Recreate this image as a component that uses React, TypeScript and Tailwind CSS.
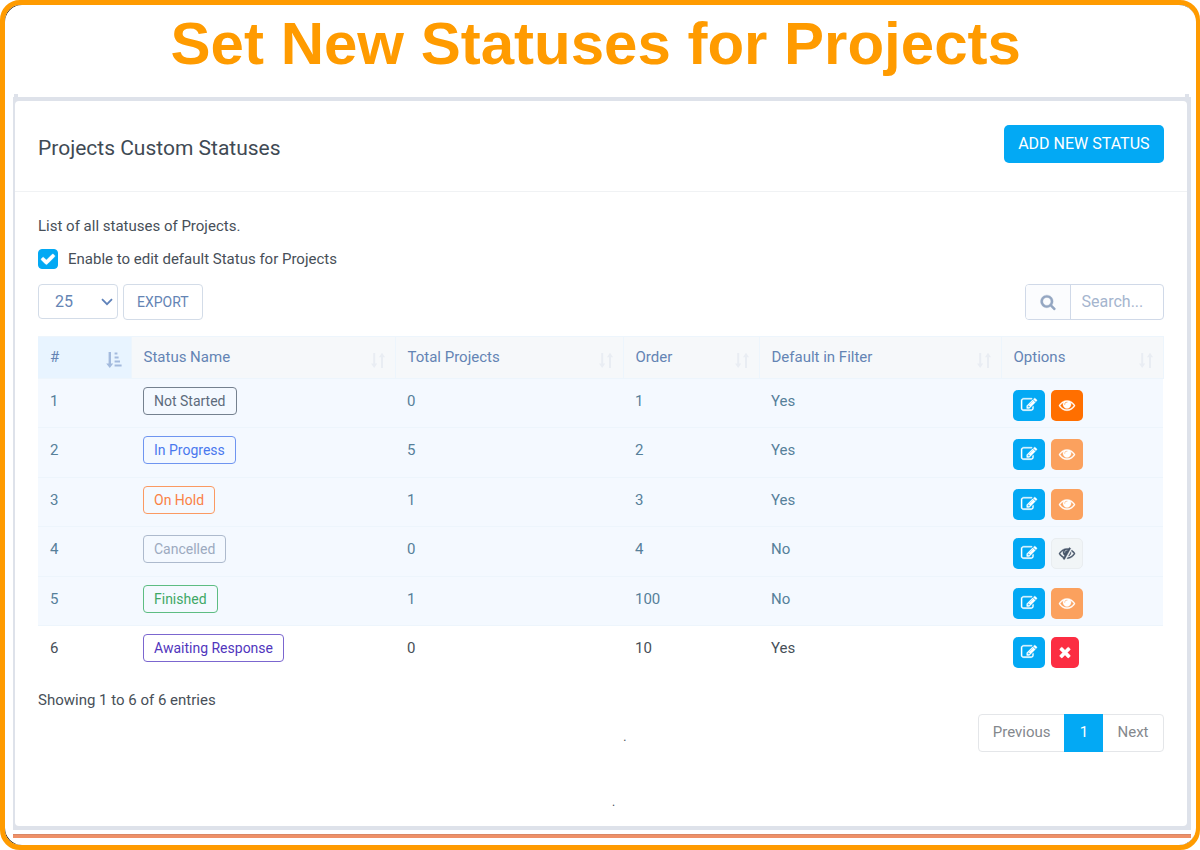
import { useState, type ReactNode } from "react";

type Status = {
  id: number;
  name: string;
  total: number;
  order: number;
  inFilter: boolean;
  badge: string;
  action: "eye" | "eye-muted" | "hidden" | "delete";
};

const STATUSES: Status[] = [
  { id: 1, name: "Not Started", total: 0, order: 1, inFilter: true, badge: "border-[#75818f] text-[#5d6b7c]", action: "eye" },
  { id: 2, name: "In Progress", total: 5, order: 2, inFilter: true, badge: "border-[#6f95f0] text-[#4a78ee]", action: "eye-muted" },
  { id: 3, name: "On Hold", total: 1, order: 3, inFilter: true, badge: "border-[#fb9a62] text-[#fa8144]", action: "eye-muted" },
  { id: 4, name: "Cancelled", total: 0, order: 4, inFilter: false, badge: "border-[#adbacd] text-[#9caac0]", action: "hidden" },
  { id: 5, name: "Finished", total: 1, order: 100, inFilter: false, badge: "border-[#5dbd82] text-[#3fa866]", action: "eye-muted" },
  { id: 6, name: "Awaiting Response", total: 0, order: 10, inFilter: true, badge: "border-[#7b66cf] text-[#5136bd]", action: "delete" },
];

const COLUMNS = [
  { label: "#", width: "w-[93px]" },
  { label: "Status Name", width: "w-[264px]" },
  { label: "Total Projects", width: "w-[228px]" },
  { label: "Order", width: "w-[136px]" },
  { label: "Default in Filter", width: "w-[242px]" },
  { label: "Options", width: "w-[162px]" },
];

const ICONS = {
  edit: "M888 1184l116-116-152-152-116 116v56h96v96h56zm440-720q-16-16-33 1l-350 350q-17 17-1 33t33-1l350-350q17-17 1-33zm80 594v190q0 119-84.5 203.5t-203.5 84.5h-832q-119 0-203.5-84.5t-84.5-203.5v-832q0-119 84.5-203.5t203.5-84.5h832q63 0 117 25 15 7 18 23 3 17-9 29l-49 49q-14 14-32 8-23-6-45-6h-832q-66 0-113 47t-47 113v832q0 66 47 113t113 47h832q66 0 113-47t47-113v-126q0-13 9-22l64-64q15-15 35-7t20 29zm-96-738l288 288-672 672h-288v-288zm444 132l-92 92-288-288 92-92q28-28 68-28t68 28l152 152q28 28 28 68t-28 68z",
  eye: "M1664 960q-152-236-381-353 61 104 61 225 0 185-131.5 316.5t-316.5 131.5-316.5-131.5-131.5-316.5q0-121 61-225-229 117-381 353 133 205 333.5 326.5t434.5 121.5 434.5-121.5 333.5-326.5zm-720-384q0-20-14-34t-34-14q-125 0-214.5 89.5t-89.5 214.5q0 20 14 34t34 14 34-14 14-34q0-86 61-147t147-61q20 0 34-14t14-34zm848 384q0 34-20 69-140 230-376.5 368.5t-499.5 138.5-499.5-139-376.5-368q-20-35-20-69t20-69q140-229 376.5-368t499.5-139 499.5 139 376.5 368q20 35 20 69z",
  eyeSlash: "M555 1335l78-141q-87-63-136-159t-49-203q0-121 61-225-229 117-381 353 167 258 427 375zm389-759q0-20-14-34t-34-14q-125 0-214.5 89.5t-89.5 214.5q0 20 14 34t34 14 34-14 14-34q0-86 61-147t147-61q20 0 34-14t14-34zm363-191q0 7-1 9-106 189-316 567t-315 566l-49 89q-10 16-28 16-12 0-134-70-16-10-16-28 0-12 44-87-143-65-263.5-173t-208.5-245q-20-31-20-69t20-69q153-235 380-371t496-136q89 0 180 17l54-97q10-16 28-16 5 0 18 6t31 15.5 33 18.5 31.5 18.5 19.5 11.5q16 10 16 27zm37 447q0 139-79 253.5t-209 164.5l280-502q8 45 8 84zm448 128q0 35-20 69-39 64-109 145-150 172-347.5 267t-419.5 95l74-132q212-18 392.5-137t301.5-307q-115-179-282-294l63-112q95 64 182.5 153t144.5 184q20 34 20 69z",
  times: "M1490 1322q0 40-28 68l-136 136q-28 28-68 28t-68-28l-294-294-294 294q-28 28-68 28t-68-28l-136-136q-28-28-28-68t28-68l294-294-294-294q-28-28-28-68t28-68l136-136q28-28 68-28t68 28l294 294 294-294q28-28 68-28t68 28l136 136q28 28 28 68t-28 68l-294 294 294 294q28 28 28 68z",
  search: "M1216 832q0-185-131.5-316.5t-316.5-131.5-316.5 131.5-131.5 316.5 131.5 316.5 316.5 131.5 316.5-131.5 131.5-316.5zm512 832q0 52-38 90t-90 38q-54 0-90-38l-343-342q-179 124-399 124-143 0-273.5-55.5t-225-150-150-225-55.5-273.5 55.5-273.5 150-225 225-150 273.5-55.5 273.5 55.5 225 150 150 225 55.5 273.5q0 220-124 399l343 343q37 37 37 90z",
  check: "M1671 566q0 40-28 68l-724 724-136 136q-28 28-68 28t-68-28l-136-136-362-362q-28-28-28-68t28-68l136-136q28-28 68-28t68 28l294 295 656-657q28-28 68-28t68 28l136 136q28 28 28 68z",
};

function Icon({ name, className }: { name: keyof typeof ICONS; className?: string }) {
  return (
    <svg
      viewBox="0 0 1792 1792"
      fill="currentColor"
      stroke="currentColor"
      strokeWidth="40"
      overflow="visible"
      aria-hidden="true"
      className={className}
    >
      <path d={ICONS[name]} />
    </svg>
  );
}

function SortIcon({ active }: { active: boolean }) {
  if (active) {
    return (
      <svg viewBox="0 0 16 16" fill="currentColor" aria-hidden="true" className="h-4 w-4 text-[#a3badd]">
        <path d="M2.6 0h2.4v11.5h2.2L3.8 16 .2 11.5h2.4z" />
        <path d="M8.6 .5h2.8v2H8.6zM8.6 4.5h4v2h-4zM8.6 8.5h5.4v2H8.6zM8.6 12.5h7v2h-7z" />
      </svg>
    );
  }
  return (
    <svg viewBox="0 0 16 16" fill="currentColor" aria-hidden="true" className="h-4 w-4 text-[#e9edf3]">
      <path d="M3.2 1h2v10.5h2L4.2 16 1 11.5h2.2z" />
      <path d="M11 16h2V5.2h2L12 .8 9 5.2h2z" />
    </svg>
  );
}

function ActionButton({ label, className, children }: { label: string; className: string; children: ReactNode }) {
  return (
    <button
      type="button"
      aria-label={label}
      className={`flex h-[31px] items-center justify-center rounded-[5px] pb-[2px] ${className}`}
    >
      {children}
    </button>
  );
}

function RowAction({ action }: { action: Status["action"] }) {
  if (action === "delete") {
    return (
      <ActionButton label="Delete" className="w-7 bg-[#fc2d42] text-white">
        <Icon name="times" className="h-4 w-4" />
      </ActionButton>
    );
  }
  if (action === "hidden") {
    return (
      <ActionButton label="Show" className="w-8 border border-[#e9edf0] bg-[#f1f5f7] text-[#475569]">
        <Icon name="eyeSlash" className="h-4 w-4" />
      </ActionButton>
    );
  }
  return (
    <ActionButton
      label="Hide"
      className={action === "eye" ? "w-8 bg-[#ff6f00] text-white" : "w-8 bg-[#fba15e] text-white"}
    >
      <Icon name="eye" className="h-4 w-4" />
    </ActionButton>
  );
}

export default function App() {
  const [editDefaults, setEditDefaults] = useState(true);
  const [pageSize, setPageSize] = useState("25");
  const [query, setQuery] = useState("");

  const rows = STATUSES.filter((s) => s.name.toLowerCase().includes(query.toLowerCase()));

  return (
    <div className="flex min-h-screen rounded-[20px] border-5 border-[#ff9b00] bg-[#2b1a00] bg-clip-padding">
      {/* slightly rounder than the frame, which leaves a dark sliver in each corner */}
      <div className="flex flex-1 flex-col rounded-[17px] bg-white pr-[5px] pb-[7px] pl-2 font-['Roboto',sans-serif] text-[15px] text-[#474f58]">
        <h1 className="flex h-[92px] items-start justify-center pt-1 pr-3 font-['Liberation_Sans',sans-serif] text-[60px] leading-[70px] font-bold text-[#ff9b00]">
          Set New Statuses for Projects
        </h1>

        <main className="relative flex flex-1 border-t-4 border-r-4 border-b-4 border-l-2 border-[#dee2ea] bg-[#dee2ea]">
          <span className="absolute -top-[7px] -left-px h-[3px] w-1 bg-[#dee2ea]" />
          <span className="absolute -top-[7px] -right-[2px] h-[3px] w-1 bg-[#dee2ea]" />

          <div className="flex-1 rounded bg-white">
            <header className="flex h-[91px] items-start justify-between border-b border-[#f0f2f4] px-[23px] pt-6">
              <h2 className="text-[21px] leading-[46px] text-[#3f4a54]">Projects Custom Statuses</h2>
              <button type="button" className="h-[38px] rounded-[5px] bg-[#03a9f4] px-[14px] text-base text-white">
                ADD NEW STATUS
              </button>
            </header>

            <section className="px-[23px] pt-[22px]">
              <p className="leading-6">List of all statuses of Projects.</p>
              <div className="mt-[11px] flex h-5 items-center">
                <span className="relative flex h-5 w-5">
                  <input
                    id="edit-defaults"
                    type="checkbox"
                    checked={editDefaults}
                    onChange={(e) => setEditDefaults(e.target.checked)}
                    className="h-5 w-5 appearance-none rounded border border-[#03a9f4] bg-white checked:bg-[#03a9f4]"
                  />
                  {editDefaults && (
                    <Icon name="check" className="pointer-events-none absolute top-[2px] left-[2px] h-4 w-4 text-white" />
                  )}
                </span>
                <label htmlFor="edit-defaults" className="pl-[10px]">
                  Enable to edit default Status for Projects
                </label>
              </div>

              <div className="mt-[15px] flex items-start justify-between">
                <div className="flex items-start gap-[5px]">
                  <span className="relative">
                    <select
                      aria-label="Rows per page"
                      value={pageSize}
                      onChange={(e) => setPageSize(e.target.value)}
                      className="block h-[35px] w-20 appearance-none rounded border border-[#d3dce8] bg-white pl-4 text-base text-[#6484b4]"
                    >
                      <option>10</option>
                      <option>25</option>
                      <option>50</option>
                    </select>
                    <svg
                      viewBox="0 0 12 8"
                      fill="none"
                      stroke="#5f82ba"
                      strokeWidth="1.8"
                      aria-hidden="true"
                      className="pointer-events-none absolute top-[14px] right-[5px] h-2 w-3"
                    >
                      <path d="M1 1.2l5 5 5-5" />
                    </svg>
                  </span>
                  <button type="button" className="h-9 rounded border border-[#d3dce8] px-[13px] text-sm text-[#6484b4]">
                    EXPORT
                  </button>
                </div>
                <div className="flex h-9 w-[139px] overflow-hidden rounded border border-[#d0d9e8]">
                  <label htmlFor="search" aria-label="Search" className="flex w-[45px] items-center justify-center border-r border-[#d0d9e8] bg-[#fbfcfe] text-[#94a6c2]">
                    <Icon name="search" className="h-4 w-4" />
                  </label>
                  <input
                    id="search"
                    type="text"
                    placeholder="Search..."
                    value={query}
                    onChange={(e) => setQuery(e.target.value)}
                    className="min-w-0 flex-1 px-[11px] text-base outline-none placeholder:text-[#a5b5ce]"
                  />
                </div>
              </div>

              <table className="mt-4 w-full table-fixed border-collapse text-left">
                <thead>
                  <tr className="h-[42px]">
                    {COLUMNS.map((col, i) => (
                      <th
                        key={col.label}
                        scope="col"
                        className={`${col.width} border-y border-r border-[#edf5fc] pr-[9px] pl-3 font-normal text-[#6484b4] ${i === 0 ? "bg-[#e8f4ff]" : "bg-[#f6f8fa]"}`}
                      >
                        <span className="flex items-center justify-between">
                          {col.label}
                          <span className="pt-1">
                            <SortIcon active={i === 0} />
                          </span>
                        </span>
                      </th>
                    ))}
                  </tr>
                </thead>
                <tbody>
                  {rows.map((s) => {
                    // built-in statuses are tinted, custom ones are not
                    const builtIn = s.id <= 5;
                    return (
                      <tr
                        key={s.id}
                        className={`h-[49px] align-top leading-7 even:h-[50px] ${builtIn ? "border-b border-[#edf5fc] bg-[#f4f9ff] text-[#56809a]" : ""}`}
                      >
                        <td className="pt-2 pl-3">{s.id}</td>
                        <td className="pt-2 pl-3">
                          <span className={`block h-7 w-fit rounded border px-[10px] text-sm leading-[26px] ${s.badge}`}>
                            {s.name}
                          </span>
                        </td>
                        <td className="pt-2 pl-3">{s.total}</td>
                        <td className="pt-2 pl-3">{s.order}</td>
                        <td className="pt-2 pl-3">{s.inFilter ? "Yes" : "No"}</td>
                        <td className="pt-[11px] pl-3">
                          <div className="flex gap-[6px]">
                            <ActionButton label="Edit" className="w-8 bg-[#03a9f4] text-white">
                              <Icon name="edit" className="h-4 w-4" />
                            </ActionButton>
                            <RowAction action={s.action} />
                          </div>
                        </td>
                      </tr>
                    );
                  })}
                </tbody>
              </table>

              <p className="mt-3 leading-6">Showing 1 to 6 of 6 entries</p>

              <div className="mt-[2px] flex items-center justify-between">
                <p className="flex-1 pt-2 pl-[52%] text-xs leading-4">.</p>
                <nav aria-label="Pagination" className="flex h-[38px] rounded border border-[#e4e6e9] text-[#84888d]">
                  <button type="button" className="px-[14px]">
                    Previous
                  </button>
                  <button type="button" aria-current="page" className="-my-px w-[39px] bg-[#03a9f4] text-white">
                    1
                  </button>
                  <button type="button" className="px-[14px]">
                    Next
                  </button>
                </nav>
              </div>
              <p className="mt-[42px] pl-[51%] text-xs leading-4">.</p>
            </section>
          </div>
        </main>

        <div className="mt-1 h-1 border-t border-[#d98765] bg-[#ef9067]" />
      </div>
    </div>
  );
}
